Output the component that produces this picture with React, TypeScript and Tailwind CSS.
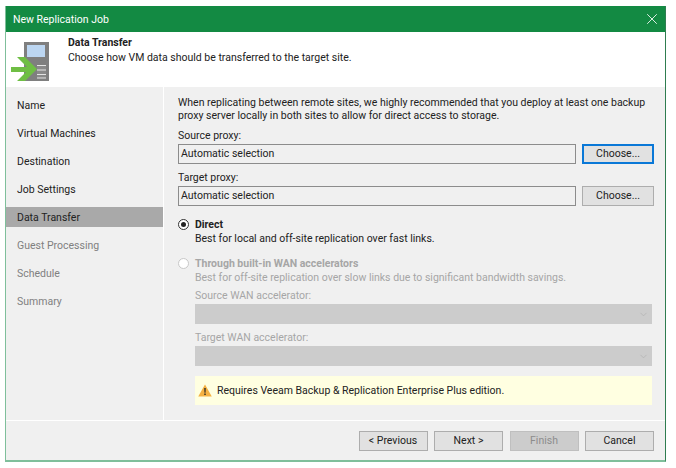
import { ChevronDown, X } from 'lucide-react';

const steps = [
  { label: 'Name', state: 'done' },
  { label: 'Virtual Machines', state: 'done' },
  { label: 'Destination', state: 'done' },
  { label: 'Job Settings', state: 'done' },
  { label: 'Data Transfer', state: 'active' },
  { label: 'Guest Processing', state: 'todo' },
  { label: 'Schedule', state: 'todo' },
  { label: 'Summary', state: 'todo' }
];

function WizardIcon() {
  return (
    <svg width="38" height="39" viewBox="0 0 38 39" className="block">
      <rect x="13" y="0" width="25" height="39" fill="#7f7f7f" />
      <rect x="16" y="3" width="18" height="12" fill="#bcd6f1" />
      <rect x="26" y="23" width="9" height="13" fill="#8a8a8a" />
      <path d="M26 23.500h9M26 28h9M26 32.500h9M26 36h9" stroke="#e4e4e4" strokeWidth="1" fill="none" />
      <path d="M6 15H14L26 27L14 39H6L15 30H0V25H16Z" fill="#6fbe44" />
    </svg>
  );
}

function Button({ children, disabled }: { children: string; disabled?: boolean }) {
  return (
    <div
      className={`flex h-5 w-[69px] items-center justify-center border ${
        disabled ? 'border-[#bfbfbf] bg-[#cccccc] text-[#8c8c8c]' : 'border-[#adadad] bg-[#e1e1e1] text-[#222]'
      }`}
    >
      {children}
    </div>
  );
}

function ProxyRow({ label, focused }: { label: string; focused?: boolean }) {
  return (
    <div className="flex flex-col">
      <div className="h-[13px] pt-px leading-[13px]">{label}</div>
      <div className="mt-[3px] flex gap-[6px]">
        <div className="flex h-5 w-[398px] items-center border border-[#8c8c8c] pl-[2px]">Automatic selection</div>
        <div
          className={`flex h-5 w-[72px] items-center justify-center bg-[#e1e1e1] ${
            focused ? 'border-2 border-[#0a78d7]' : 'border border-[#adadad]'
          }`}
        >
          Choose...
        </div>
      </div>
    </div>
  );
}

function WanSelect({ label }: { label: string }) {
  return (
    <div className="flex flex-col text-[#a6a6a6]">
      <div className="h-[13px] leading-[13px]">{label}</div>
      <div className="mt-[2px] flex h-5 w-[457px] items-center justify-end bg-[#cccccc] pr-[3px]">
        <ChevronDown size={11} strokeWidth={1.500} color="#b0b0b0" />
      </div>
    </div>
  );
}

export default function App() {
  return (
    <div className="h-[468px] w-[676px] bg-white pl-[5px] pt-[6px] font-['Roboto','Noto_Sans',sans-serif] text-[10.500px] text-[#222]">
      <div className="flex h-[456px] w-[661px] flex-col border-b-2 border-l border-r border-b-[#7fbf9b] border-l-[#7fbf9b] border-r-[#2f7d50]">
        {/* Title bar */}
        <div className="flex h-[26px] shrink-0 items-center justify-between bg-[#138a43] pl-[7px] pr-[4px] text-white">
          <span className="pt-px">New Replication Job</span>
          <X size={18} strokeWidth={1.300} color="#dff0e6" />
        </div>

        {/* Header */}
        <div className="flex h-[55px] shrink-0 bg-white">
          <div className="ml-[5px] mt-[10px] w-[40px]">
            <WizardIcon />
          </div>
          <div className="ml-[17px] mt-[3px] flex flex-col leading-[15px]">
            <span className="font-bold">Data Transfer</span>
            <span>Choose how VM data should be transferred to the target site.</span>
          </div>
        </div>

        {/* Body */}
        <div className="flex h-[334px] shrink-0 border-b border-white bg-[#f0f0f0]">
          <div className="flex w-[158px] shrink-0 flex-col gap-2 border-r border-white pt-[8px]">
            {steps.map((step) => (
              <div
                key={step.label}
                className={`flex h-5 items-center pl-[11px] pt-[2px] ${
                  step.state === 'active' ? 'bg-[#a9a9a9]' : step.state === 'todo' ? 'text-[#808080]' : ''
                }`}
              >
                {step.label}
              </div>
            ))}
          </div>

          <div className="flex flex-col pl-[14px] pt-[9px]">
            <div className="leading-[13px]">
              <div className="whitespace-nowrap">When replicating between remote sites, we highly recommended that you deploy at least one backup</div>
              <div className="whitespace-nowrap">proxy server locally in both sites to allow for direct access to storage.</div>
            </div>

            <div className="mt-[6px]">
              <ProxyRow label="Source proxy:" focused />
            </div>
            <div className="mt-[6px]">
              <ProxyRow label="Target proxy:" />
            </div>

            {/* Direct */}
            <div className="mt-[12px] flex">
              <div className="mr-[6px] mt-[1px] flex h-[11px] w-[11px] items-center justify-center rounded-full border border-[#333] bg-white">
                <div className="h-[5px] w-[5px] rounded-full bg-[#222]" />
              </div>
              <div className="flex flex-col leading-[14px]">
                <span className="font-bold">Direct</span>
                <span>Best for local and off-site replication over fast links.</span>
              </div>
            </div>

            {/* WAN */}
            <div className="mt-[11px] flex">
              <div className="mr-[6px] mt-[1px] h-[11px] w-[11px] rounded-full border border-[#c8c8c8] bg-white" />
              <div className="flex flex-col text-[#a6a6a6]">
                <span className="font-bold leading-[14px]">Through built-in WAN accelerators</span>
                <span className="leading-[14px]">Best for off-site replication over slow links due to significant bandwidth savings.</span>
                <div className="mt-[4px]">
                  <WanSelect label="Source WAN accelerator:" />
                </div>
                <div className="mt-[7px]">
                  <WanSelect label="Target WAN accelerator:" />
                </div>
                <div className="mt-[10px] flex h-[29px] w-[457px] items-center gap-[5px] bg-[#ffffe1] pl-[3px] text-[#222]">
                  <svg width="14" height="13" viewBox="0 0 14 13">
                    <path d="M7 0.500L13.800 12.500H0.200Z" fill="#f5b142" />
                    <path d="M6.300 4h1.400l-0.200 4.700h-1zM6.300 9.500h1.400v1.500h-1.400z" fill="#222" />
                  </svg>
                  <span className="pt-px">Requires Veeam Backup &amp; Replication Enterprise Plus edition.</span>
                </div>
              </div>
            </div>
          </div>
        </div>

        {/* Footer */}
        <div className="flex flex-1 items-start justify-end gap-[6.500px] bg-[#f0f0f0] pr-[11px] pt-[10px]">
          <Button>&lt; Previous</Button>
          <Button>Next &gt;</Button>
          <Button disabled>Finish</Button>
          <Button>Cancel</Button>
        </div>
      </div>
    </div>
  );
}
